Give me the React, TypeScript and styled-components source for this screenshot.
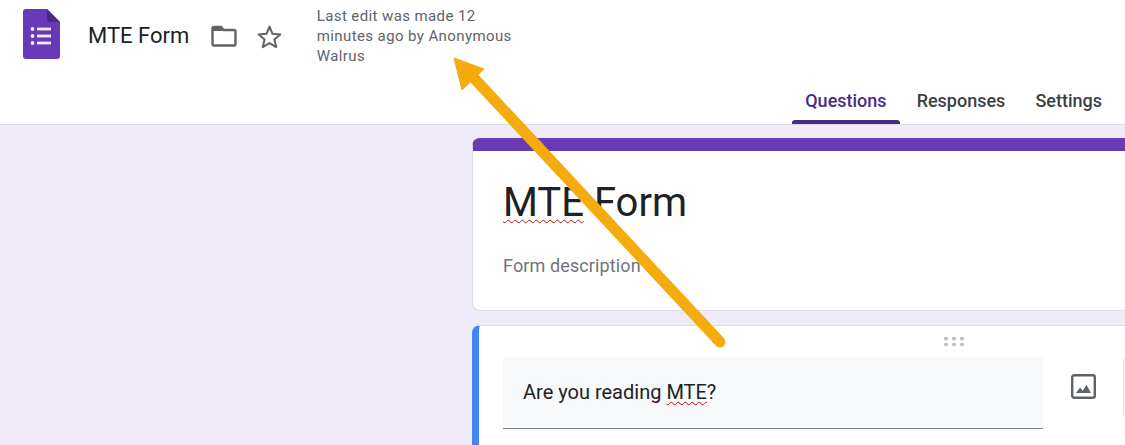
import React from "react";
import styled, { createGlobalStyle } from "styled-components";

const Global = createGlobalStyle`
  html, body { margin: 0; padding: 0; background: #f0ebf8; }
  #root { height: 445px; overflow: hidden; }
`;

const Page = styled.div`
  position: relative;
  width: 1125px;
  height: 445px;
  overflow: hidden;
  display: flex;
  flex-direction: column;
  font-family: Roboto, "Liberation Sans", sans-serif;
  color: #202124;
`;

const Header = styled.header`
  flex: none;
  height: 124px;
  background: #fff;
  border-bottom: 1px solid #dadce0;
  display: flex;
  flex-direction: column;
  justify-content: space-between;
`;

const TopRow = styled.div`
  display: flex;
  align-items: flex-start;
  padding: 6px 0 0 23px;
`;

const Logo = styled.svg`
  width: 37px;
  height: 50px;
  margin-top: 3px;
  flex: none;
`;

const DocTitle = styled.div`
  margin-left: 28px;
  margin-top: 16px;
  font-size: 22px;
  line-height: 28px;
  color: #202124;
`;

const HeaderIcon = styled.svg<{ $gap: number }>`
  flex: none;
  margin-left: ${(p) => p.$gap}px;
  margin-top: 19px;
`;

const EditNote = styled.div`
  margin-left: 34.5px;
  margin-top: 0;
  width: 200px;
  font-size: 15px;
  line-height: 20px;
  letter-spacing: 0.4px;
  color: #5f6368;
`;

const Tabs = styled.nav`
  display: flex;
  justify-content: flex-end;
  gap: 4px;
  padding-right: 10px;
`;

const Tab = styled.div<{ $active?: boolean }>`
  position: relative;
  height: 45px;
  padding: 0 13px 2px;
  box-sizing: border-box;
  display: flex;
  align-items: center;
  font-family: Roboto, sans-serif;
  font-size: 18px;
  font-weight: 500;
  color: ${(p) => (p.$active ? "#4a2a85" : "#3c4043")};
  &::after {
    content: "";
    display: ${(p) => (p.$active ? "block" : "none")};
    position: absolute;
    left: 0;
    right: 0;
    bottom: 0;
    height: 4px;
    background: #4a2a85;
    border-radius: 3px 3px 0 0;
  }
`;

const Body = styled.main`
  flex: 1;
  min-height: 0;
  background: #f0ebf8;
  padding: 13px 0 0 472px;
  display: flex;
  flex-direction: column;
  gap: 14px;
  width: 900px;
`;

const TitleCard = styled.section`
  flex: none;
  height: 173px;
  width: 900px;
  background: #fff;
  border: 1px solid #dadce0;
  border-top: 13px solid #673ab7;
  border-radius: 8px;
  box-sizing: border-box;
  padding: 28px 0 0 30px;
`;

const FormTitle = styled.div`
  font-size: 40px;
  line-height: 48px;
  color: #202124;
`;

const Squiggle = styled.span<{ $offset: number }>`
  text-decoration: underline wavy #b3140f 1px;
  text-underline-offset: ${(p) => p.$offset}px;
`;

const FormDesc = styled.div`
  margin-top: 27px;
  font-size: 18px;
  line-height: 24px;
  letter-spacing: 0.12px;
  color: #70757a;
`;

const QuestionCard = styled.section`
  flex: none;
  height: 160px;
  width: 900px;
  background: #fff;
  border: 1px solid #dadce0;
  border-left: 7px solid #4285f4;
  border-radius: 8px;
  box-sizing: border-box;
  position: relative;
  display: flex;
  flex-direction: column;
`;

const DragHandle = styled.svg`
  align-self: flex-start;
  margin: 11px 0 0 465px;
  flex: none;
`;

const QuestionRow = styled.div`
  display: flex;
  align-items: flex-start;
  margin-top: 11px;
  padding-left: 24px;
`;

const QuestionInput = styled.div`
  width: 540px;
  height: 72px;
  box-sizing: border-box;
  background: #f8f9fa;
  border-bottom: 1px solid #80868b;
  padding: 0 20px 1px;
  display: flex;
  align-items: center;
  font-size: 20px;
  color: #202124;
`;

const ImageIcon = styled.svg`
  flex: none;
  margin: 16px 0 0 27px;
`;

const TypeSelect = styled.div`
  flex: none;
  width: 80px;
  height: 60px;
  margin-left: 26px;
  box-sizing: border-box;
  border: 1px solid #dadce0;
  border-radius: 4px;
`;

const Arrow = styled.svg`
  position: absolute;
  inset: 0;
  pointer-events: none;
`;

export default function App() {
  return (
    <>
      <Global />
      <Page>
        <Header>
          <TopRow>
            <Logo viewBox="0 0 37 50">
              <path d="M3 0H24L37 13V47a3 3 0 0 1-3 3H3a3 3 0 0 1-3-3V3a3 3 0 0 1 3-3Z" fill="#673ab7" />
              <path d="M24 0L37 13H27a3 3 0 0 1-3-3Z" fill="#4a2a85" />
              <circle cx="9.5" cy="20" r="1.9" fill="#f1ecf9" />
              <circle cx="9.5" cy="27" r="1.9" fill="#f1ecf9" />
              <circle cx="9.5" cy="34" r="1.9" fill="#f1ecf9" />
              <rect x="14" y="18.6" width="14" height="2.8" fill="#f1ecf9" />
              <rect x="14" y="25.6" width="14" height="2.8" fill="#f1ecf9" />
              <rect x="14" y="32.6" width="14" height="2.8" fill="#f1ecf9" />
            </Logo>
            <DocTitle>MTE Form</DocTitle>
            <HeaderIcon $gap={22} width="26" height="22" viewBox="0 0 26 22">
              <path
                d="M3 2h7l2.5 3H23a1.5 1.5 0 0 1 1.5 1.5V19a1.5 1.5 0 0 1-1.5 1.5H3A1.5 1.5 0 0 1 1.5 19V3.5A1.5 1.5 0 0 1 3 2Z"
                fill="none"
                stroke="#5f6368"
                strokeWidth="2.4"
              />
              <path d="M2 2.5h8l2 3.5H2Z" fill="#5f6368" />
            </HeaderIcon>
            <HeaderIcon $gap={20} width="25" height="24" viewBox="0 0 25 24">
              <path
                d="M12.5 1.6l3 7.2 7.8.6-5.9 5.1 1.8 7.6-6.7-4-6.7 4 1.8-7.6-5.9-5.1 7.8-.6Z"
                fill="none"
                stroke="#5f6368"
                strokeWidth="2"
                strokeLinejoin="round"
              />
            </HeaderIcon>
            <EditNote>Last edit was made 12 minutes ago by Anonymous Walrus</EditNote>
          </TopRow>
          <Tabs>
            <Tab $active>Questions</Tab>
            <Tab>Responses</Tab>
            <Tab>Settings</Tab>
          </Tabs>
        </Header>
        <Body>
          <TitleCard>
            <FormTitle>
              <Squiggle $offset={3}>MTE</Squiggle> Form
            </FormTitle>
            <FormDesc>Form description</FormDesc>
          </TitleCard>
          <QuestionCard>
            <DragHandle width="20" height="9" viewBox="0 0 20 9">
              {[2, 10, 18].map((x) =>
                [1.5, 7.5].map((y) => <circle key={`${x}-${y}`} cx={x} cy={y} r="2" fill="#bdc1c6" />)
              )}
            </DragHandle>
            <QuestionRow>
              <QuestionInput>
                <span>
                  Are you reading <Squiggle $offset={2}>MTE</Squiggle>?
                </span>
              </QuestionInput>
              <ImageIcon width="27" height="27" viewBox="0 0 27 27">
                <rect x="2.2" y="2.2" width="22.6" height="22.6" rx="2" fill="none" stroke="#5f6368" strokeWidth="2.4" />
                <path d="M6 20l4-5.5 2.8 3.3 3.6-6L21 20Z" fill="#5f6368" />
              </ImageIcon>
              <TypeSelect />
            </QuestionRow>
          </QuestionCard>
        </Body>
        <Arrow width="1125" height="445" viewBox="0 0 1125 445">
          <path d="M720 342L472 76" stroke="#f4ab0b" strokeWidth="11" strokeLinecap="round" fill="none" />
          <path d="M454 58L484 69L462 90Z" fill="#f4ab0b" stroke="#f4ab0b" strokeWidth="1" strokeLinejoin="round" />
        </Arrow>
      </Page>
    </>
  );
}
